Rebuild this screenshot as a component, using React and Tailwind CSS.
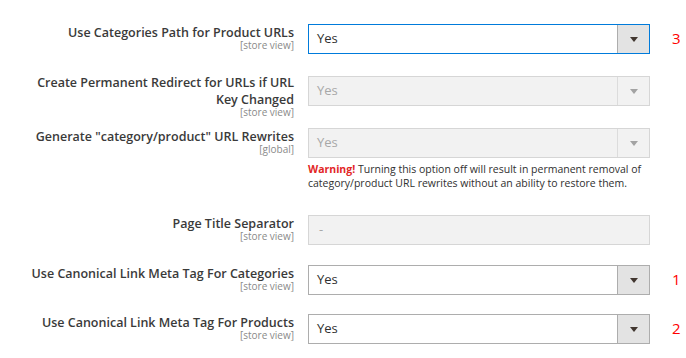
const FONT = { fontFamily: '"Open Sans", "Liberation Sans", sans-serif' };

function Arrow({ disabled }) {
  return (
    <svg width="8" height="5" viewBox="0 0 8 5">
      <path d="M0 0 L8 0 L4 5 Z" fill={disabled ? '#a3a3a3' : '#41362f'} />
    </svg>
  );
}

function Select({ value, disabled, focused }) {
  const border = focused ? 'border-[#007bdb]' : disabled ? 'border-[#d6d6d6]' : 'border-[#adadad]';
  return (
    <div className={`flex h-[30px] w-[342px] border ${border} ${disabled ? 'bg-[#f2f2f2]' : 'bg-white'}`}>
      <div className={`flex flex-1 items-center pl-[8px] text-[13px] ${disabled ? 'text-[#a8a8a8]' : 'text-[#303030]'}`}>
        {value}
      </div>
      <div
        className={`flex w-[32px] items-center justify-center border-l ${
          disabled ? 'border-[#dcdcdc] bg-[#f2f2f2]' : 'border-[#adadad] bg-[#e3e3e3]'
        }`}
      >
        <Arrow disabled={disabled} />
      </div>
    </div>
  );
}

function Label({ lines, scope, className = '' }) {
  return (
    <div className={`w-[294px] shrink-0 text-right ${className}`}>
      {lines.map(l => (
        <div key={l} className="text-[12.5px] font-semibold leading-[17px] text-[#3a3a3a]">{l}</div>
      ))}
      <div className="-mt-[2px] text-[10px] leading-[12px] text-[#8a8a8a]">{scope}</div>
    </div>
  );
}

function Row({ lines, scope, children, note, labelClass, className = '' }) {
  return (
    <div className={`flex gap-[14px] ${className}`}>
      <Label lines={lines} scope={scope} className={labelClass} />
      <div className="w-[342px]">{children}</div>
      {note && <div className="pl-[8px] pt-[5px] text-[15px] leading-[18px] text-[#ff0000]">{note}</div>}
    </div>
  );
}

export default function App() {
  return (
    <div className="h-[358px] w-[686px] overflow-hidden bg-white pt-[24px]" style={FONT}>
      <Row lines={['Use Categories Path for Product URLs']} scope="[store view]" note="3">
        <Select value="Yes" focused />
      </Row>

      <Row
        className="mt-[22px]"
        labelClass="-mt-[2px]"
        lines={['Create Permanent Redirect for URLs if URL', 'Key Changed']}
        scope="[store view]"
      >
        <Select value="Yes" disabled />
      </Row>

      <Row className="mt-[10px]" lines={['Generate "category/product" URL Rewrites']} scope="[global]">
        <Select value="Yes" disabled />
        <p className="mt-[5px] text-[10.5px] leading-[13.5px] text-[#303030]">
          <span className="font-bold text-[#e22626]">Warning!</span> Turning this option off will result in
          permanent removal of category/product URL rewrites without an ability to restore them.
        </p>
      </Row>

      <Row className="mt-[25px]" lines={['Page Title Separator']} scope="[store view]">
        <div className="flex h-[30px] items-center border border-[#d6d6d6] bg-[#f2f2f2] pl-[10px] text-[13px] text-[#a8a8a8]">
          -
        </div>
      </Row>

      <Row className="mt-[20px]" lines={['Use Canonical Link Meta Tag For Categories']} scope="[store view]" note="1">
        <Select value="Yes" />
      </Row>

      <Row className="mt-[19px]" lines={['Use Canonical Link Meta Tag For Products']} scope="[store view]" note="2">
        <Select value="Yes" />
      </Row>
    </div>
  );
}
